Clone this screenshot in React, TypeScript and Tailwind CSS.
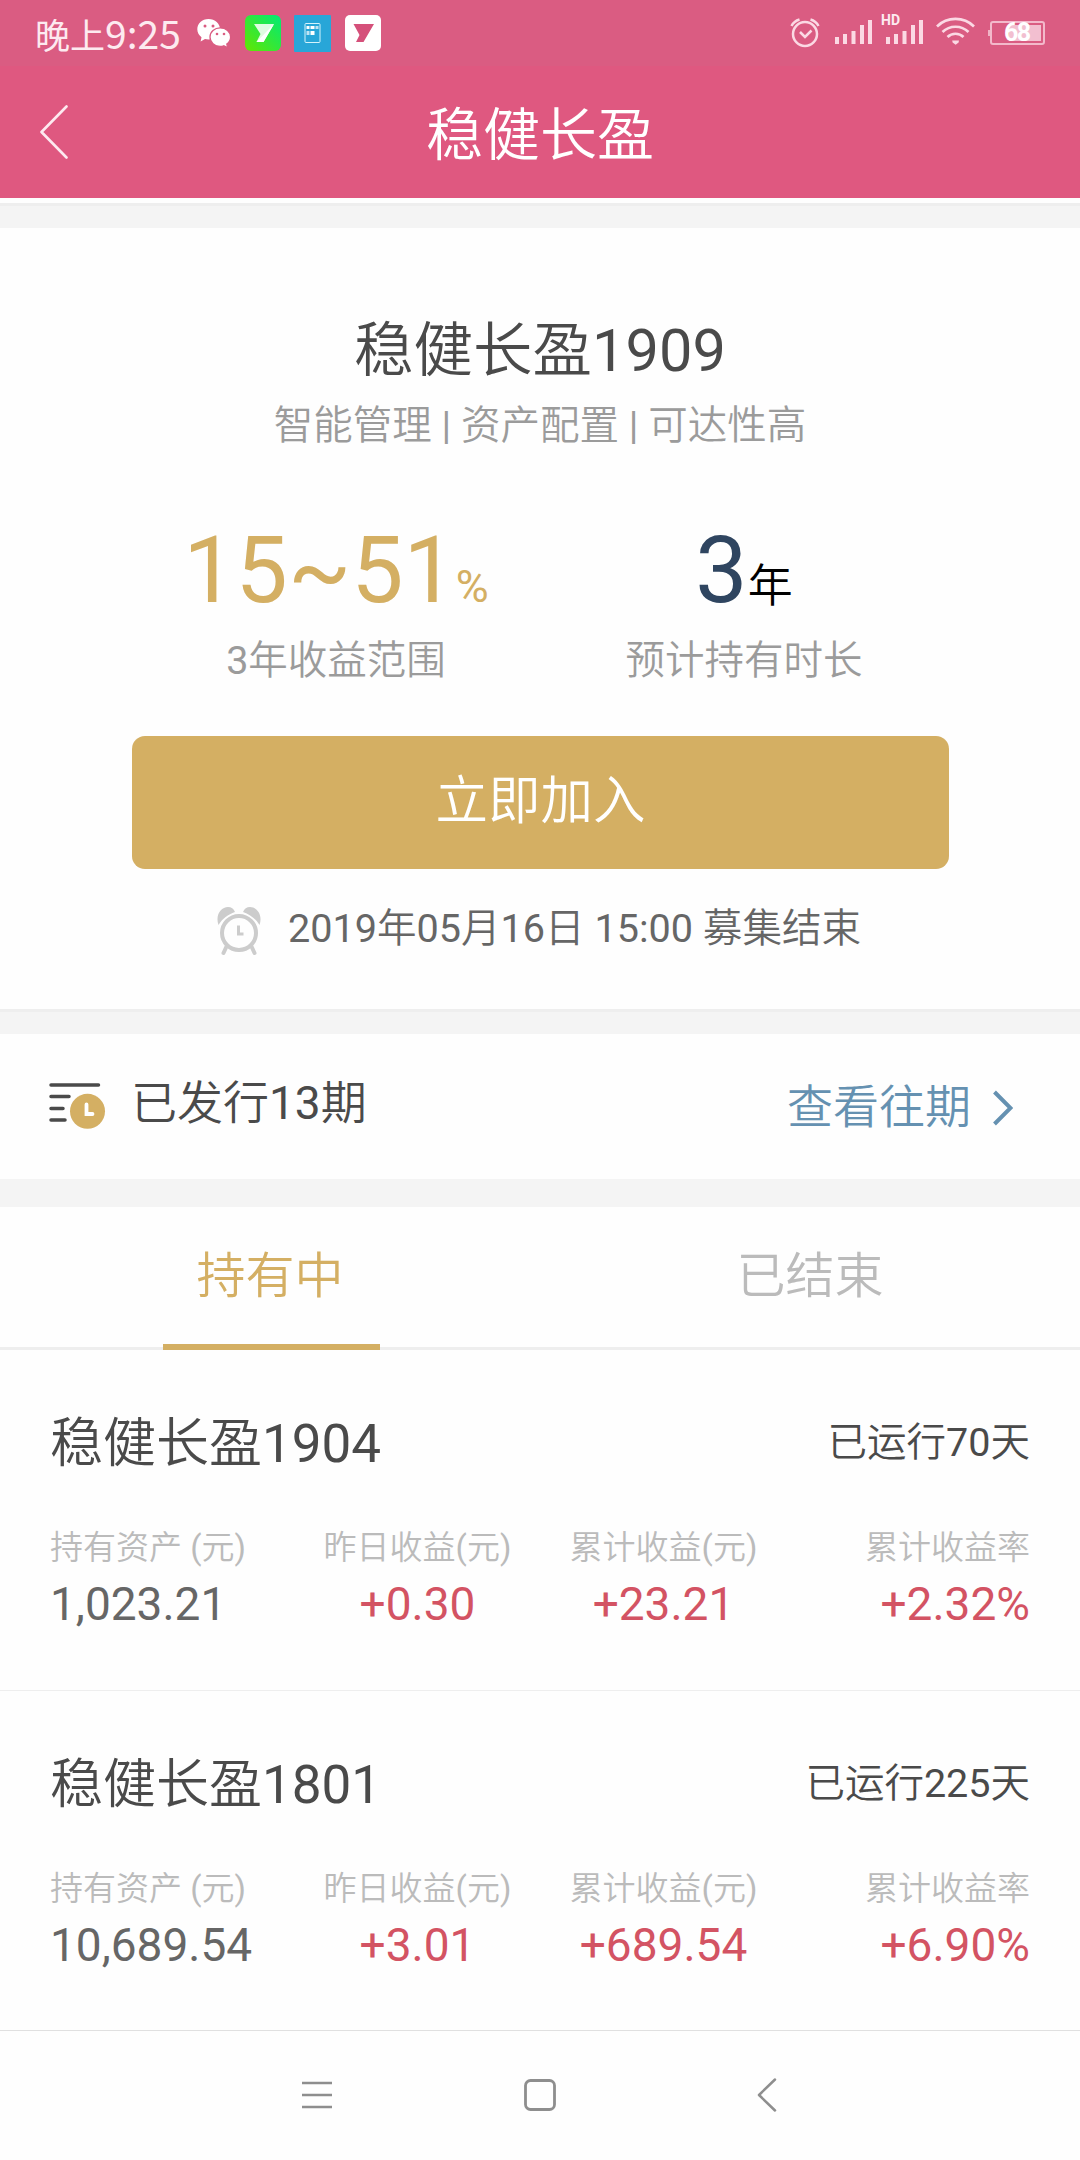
interface IHolding {
  name: string;
  days: string;
  assets: string;
  yesterday: string;
  total: string;
  rate: string;
}

const holdings: IHolding[] = [
  {
    name: "稳健长盈1904",
    days: "已运行70天",
    assets: "1,023.21",
    yesterday: "+0.30",
    total: "+23.21",
    rate: "+2.32%",
  },
  {
    name: "稳健长盈1801",
    days: "已运行225天",
    assets: "10,689.54",
    yesterday: "+3.01",
    total: "+689.54",
    rate: "+6.90%",
  },
];

const WechatIcon = () => (
  <svg className="w-9 h-8" viewBox="0 0 36 32" fill="none">
    <path
      fill="#fff"
      d="M12.500 1C6 1 1.300 5.500 1.300 11.300c0 3.300 1.600 6 4.200 8L4.600 23.500l4.400-2.500c1.100.3 2.300.5 3.500.5C19 21.500 24 17 24 11.200S19 1 12.500 1z"
    />
    <path
      fill="#fff"
      stroke="#da5c82"
      strokeWidth="1.300"
      d="M24.200 9.900c-5.700 0-10.200 4-10.200 9.200s4.500 9.300 10.200 9.300c1.300 0 2.500-.2 3.600-.6l3.900 2-.9-3.700c2.400-1.700 3.800-4.200 3.800-7 0-5.200-4.700-9.200-10.400-9.200z"
    />
    <circle cx="9" cy="8" r="1.500" fill="#da5c82" />
    <circle cx="17" cy="8" r="1.500" fill="#da5c82" />
    <circle cx="21" cy="16" r="1.300" fill="#da5c82" />
    <circle cx="28" cy="16" r="1.300" fill="#da5c82" />
  </svg>
);

const GreenAppIcon = () => (
  <svg className="w-9 h-9" viewBox="0 0 36 36">
    <defs>
      <linearGradient id="green" x1="0" y1="1" x2="1" y2="0">
        <stop offset="0" stopColor="#62e600" />
        <stop offset="1" stopColor="#00ea76" />
      </linearGradient>
    </defs>
    <rect width="36" height="36" rx="6" fill="url(#green)" />
    <path d="M9 9h20L18.500 27H11.500l4-8z" fill="#fff" opacity=".85" />
    <path d="M29 9L18.500 27H11.500z" fill="#fff" />
  </svg>
);

const BlueAppIcon = () => (
  <svg className="w-[37px] h-[37px]" viewBox="0 0 37 37">
    <rect width="37" height="37" rx="1" fill="#28a6d8" />
    <rect x="11" y="8.500" width="15" height="19" rx="1" fill="none" stroke="#d5f3fb" />
    <g fill="#fff">
      <rect x="12.500" y="11" width="3" height="3" />
      <rect x="16.500" y="11" width="4" height="3" />
      <rect x="21.500" y="11" width="3" height="3" opacity=".7" />
      <rect x="12.500" y="16" width="3" height="4" opacity=".7" />
      <rect x="16.500" y="16" width="4" height="4" />
    </g>
  </svg>
);

const WhiteAppIcon = () => (
  <svg className="w-9 h-9" viewBox="0 0 36 36">
    <rect width="36" height="36" rx="5" fill="#fff" />
    <path d="M8.500 9h20.500L18.500 27H11l3.500-7z" fill="#d5507a" />
  </svg>
);

// alarm, two signal meters and wifi
const StatusIcons = () => (
  <svg className="w-[190px] h-10" viewBox="0 0 190 40" fill="none" stroke="#fbd9e4">
    <circle cx="15" cy="24" r="12" strokeWidth="2.500" />
    <path d="M1.500 16C3 13 6 10.500 9.500 9.500M28.500 16C27 13 24 10.500 20.500 9.500" strokeWidth="2.500" />
    <path d="M10 22l5 5 6.500-6.500" strokeWidth="2.500" />
    <g fill="#fbd9e4" stroke="none">
      <rect x="45" y="27" width="4" height="7" />
      <rect x="53" y="24" width="4" height="10" />
      <rect x="61.500" y="21" width="4" height="13" />
      <rect x="70" y="15" width="4" height="19" />
      <rect x="78" y="10" width="4" height="24" />
      <rect x="96" y="27" width="4" height="7" />
      <rect x="104" y="24" width="4" height="10" />
      <rect x="112.500" y="21" width="4" height="13" />
      <rect x="121" y="15" width="4" height="19" />
      <rect x="129" y="10" width="4" height="24" />
      <path d="M162.200 30.500h6.800l-.4 2-3 2.200-3-2.200z" />
    </g>
    <path d="M147 16.500a26.500 26.500 0 0 1 37 0M152.500 22a18.700 18.700 0 0 1 26 0M157.500 27a11.500 11.500 0 0 1 16 0" strokeWidth="2.700" />
  </svg>
);

const ClockIcon = () => (
  <svg className="w-11 h-12" viewBox="0 0 44 48" fill="none">
    <path
      d="M1.500 18C-2 8 4 0 11 0c3.500 0 5.500 1.500 7 5C11 7.500 5.500 11.500 1.500 18zM42.500 18C46 8 40 0 33 0c-3.500 0-5.500 1.500-7 5 7 2.500 12.500 6.500 16.500 13z"
      fill="#ccc"
    />
    <circle cx="22" cy="26" r="17" stroke="#ccc" strokeWidth="4" />
    <path d="M9.500 39.500l-3 6.500M34.500 39.500l3 6.500" stroke="#ccc" strokeWidth="4" strokeLinecap="round" />
    <path d="M21.500 18.500V27h5" stroke="#ccc" strokeWidth="3" />
  </svg>
);

const IssuedIcon = () => (
  <svg className="w-[57px] h-12" viewBox="0 0 57 48" fill="none">
    <path
      d="M2 3H49.500M2 14.500H20M2 26.500H14M2 38H16"
      stroke="#4a4a4a"
      strokeWidth="3.500"
      strokeLinecap="round"
    />
    <circle cx="38.500" cy="29.300" r="17.500" fill="#d4af63" />
    <path d="M37.500 22.500v9.500h6" stroke="#fff" strokeWidth="3.800" strokeLinecap="round" />
  </svg>
);

const StatusBar = () => (
  <div className="flex h-[66px] bg-[#da5c82] text-[#fdeaf0]">
    <div className="ml-[35px] flex h-[66px] w-[161px] items-baseline pt-[12px] leading-10 font-['Noto_Sans_CJK_SC',sans-serif]">
      <span className="text-[35px]">晚上</span>
      <span className="text-[39px]">9:25</span>
    </div>
    <div className="flex items-start pt-[15px]">
      <div className="pt-[3px]">
        <WechatIcon />
      </div>
      <div className="ml-[13px]">
        <GreenAppIcon />
      </div>
      <div className="ml-[13px]">
        <BlueAppIcon />
      </div>
      <div className="ml-[14px]">
        <WhiteAppIcon />
      </div>
    </div>
    <div className="relative ml-auto mr-[35px] flex items-start pt-[10px]">
      <StatusIcons />
      <span className="absolute left-[91px] top-[12px] text-[14px] leading-4 font-bold">HD</span>
      <div className="ml-[8px] mt-[20px] h-1.5 w-0.5 bg-[#f0b4c6]" />
      <div className="relative mt-[11px] h-6 w-[55px] rounded-[3px] border-2 border-[#f3b9cb] p-0.5">
        <div className="ml-auto h-4 w-[32px] bg-[#f2bfd0]" />
        <span className="absolute left-[12px] -top-[2px] text-[25px] leading-6 font-bold tracking-[-1.5px] text-white">
          68
        </span>
      </div>
    </div>
  </div>
);

const Header = () => (
  <header className="flex h-[132px] items-center bg-[#df5880]">
    <div className="w-[140px] pl-10">
      <svg className="w-7 h-[54px]" viewBox="0 0 28 54" fill="none" stroke="#fdeaf0" strokeWidth="2.600">
        <path d="M26.500 1.500L1.500 27l25 25.500" strokeLinecap="round" strokeLinejoin="round" />
      </svg>
    </div>
    <h1 className="flex-1 pt-2 text-center text-[57px] leading-[64px] text-white">稳健长盈</h1>
    <div className="w-[140px]" />
  </header>
);

const Product = () => (
  <section className="h-[781px] px-[132px] pt-[93px] text-center">
    <h2 className="text-[59.5px] leading-[60px] text-[#4a4a4a]">稳健长盈1909</h2>
    <p className="mt-[25px] text-[39.5px] leading-10 text-[#9b9b9b]">智能管理 | 资产配置 | 可达性高</p>
    <div className="mt-[78px] grid grid-cols-2">
      <div>
        <p className="h-[93px] text-[93px] leading-[93px] text-[#d4af63]">
          15~51<span className="text-[45px] leading-none">%</span>
        </p>
        <p className="mt-[24px] text-[39.5px] leading-10 text-[#9b9b9b]">3年收益范围</p>
      </div>
      <div>
        <p className="h-[93px] text-[93px] leading-[93px] text-[#2f4560]">
          3<span className="text-[45px] leading-none text-black">年</span>
        </p>
        <p className="mt-[24px] text-[39.5px] leading-10 text-[#9b9b9b]">预计持有时长</p>
      </div>
    </div>
    <button className="mt-[55px] block h-[133px] w-[817px] rounded-[13px] bg-[#d4af63] pb-0.5 text-[52.5px] text-white">
      立即加入
    </button>
    <div className="mt-[38px] flex pl-[85px]">
      <ClockIcon />
      <p className="ml-[27px] mt-[2px] text-[39.6px] leading-10 whitespace-nowrap text-[#666]">
        2019年05月16日 15:00 募集结束
      </p>
    </div>
  </section>
);

const Issued = () => (
  <section className="flex h-[145px] items-start pl-[49px] pr-[67px]">
    <div className="pt-[48px]">
      <IssuedIcon />
    </div>
    <span className="ml-[25px] pt-[46px] text-[46px] leading-[46px] text-[#4a4a4a]">已发行13期</span>
    <a className="ml-auto flex pt-[50px] text-[46px] leading-[46px] text-[#6591b1]">
      查看往期
      <svg className="ml-[22px] mt-[6px] w-5 h-[36px]" viewBox="0 0 20 36" fill="none" stroke="#6591b1" strokeWidth="4">
        <path d="M1.500 2L17.500 18l-16 16" />
      </svg>
    </a>
  </section>
);

const Tabs = () => (
  <nav className="grid h-[143px] grid-cols-2 border-b-3 border-[#eee] text-center text-[49px]">
    <div className="flex h-[143px] flex-col items-center">
      <span className="flex-1 pt-[45px] leading-[50px] text-[#d4af63]">持有中</span>
      <div className="ml-[3px] h-1.5 w-[217px] bg-[#d4af63]" />
    </div>
    <span className="pt-[45px] leading-[50px] text-[#bbb]">已结束</span>
  </nav>
);

const Holding = ({ item }: { item: IHolding }) => (
  <div className="px-[50px] pt-[68px]">
    <div className="flex justify-between text-[#4a4a4a]">
      <h3 className="text-[53px] leading-[53px]">{item.name}</h3>
      <span className="pt-[5px] text-[39.5px] leading-10">{item.days}</span>
    </div>
    <div className="mt-[60px] flex text-[33px] leading-[33px] text-[#bbb]">
      <span className="w-[244px]">持有资产 (元)</span>
      <span className="w-[247px] text-center">昨日收益(元)</span>
      <span className="w-[245px] text-center">累计收益(元)</span>
      <span className="flex-1 text-right">累计收益率</span>
    </div>
    <div className="mt-[17px] flex text-[46px] leading-[46px] text-[#d35363]">
      <span className="w-[244px] text-[#666]">{item.assets}</span>
      <span className="w-[247px] text-center">{item.yesterday}</span>
      <span className="w-[245px] text-center">{item.total}</span>
      <span className="flex-1 text-right">{item.rate}</span>
    </div>
  </div>
);

const SystemNav = () => (
  <footer className="flex h-[130px] justify-center border-t border-[#e0e0e0] pt-[47px] pl-2">
    <svg className="w-8 h-[34px]" viewBox="0 0 32 34" stroke="#8e8e8e" strokeWidth="2.600">
      <path d="M1 5h30M1 17h30M1 29h30" />
    </svg>
    <svg className="ml-[190px] w-[34px] h-[34px]" viewBox="0 0 34 34" fill="none" stroke="#8e8e8e" strokeWidth="2.800">
      <rect x="2.500" y="2.500" width="29" height="29" rx="5" />
    </svg>
    <svg className="ml-[198px] w-8 h-[34px]" viewBox="0 0 32 34" fill="none" stroke="#8e8e8e" strokeWidth="2.500">
      <path d="M20 1.500L4 17l16 15.500" strokeLinecap="round" strokeLinejoin="round" />
    </svg>
  </footer>
);

const App = () => {
  return (
    <div className="flex h-[2160px] w-[1080px] flex-col overflow-hidden bg-[#fefefe] font-['Roboto','Noto_Sans_CJK_SC_DemiLight','Noto_Sans_CJK_SC',sans-serif]">
      <StatusBar />
      <Header />
      <div className="mt-[5px] h-[25px] border-t-3 border-[#eee] bg-[#f4f4f4]" />
      <Product />
      <div className="h-[25px] border-t-3 border-[#eee] bg-[#f4f4f4]" />
      <Issued />
      <div className="h-[28px] bg-[#f4f4f4]" />
      <Tabs />
      <div className="h-[341px] border-b border-[#eee]">
        <Holding item={holdings[0]} />
      </div>
      <div className="flex-1">
        <Holding item={holdings[1]} />
      </div>
      <SystemNav />
    </div>
  );
};

export default App;
